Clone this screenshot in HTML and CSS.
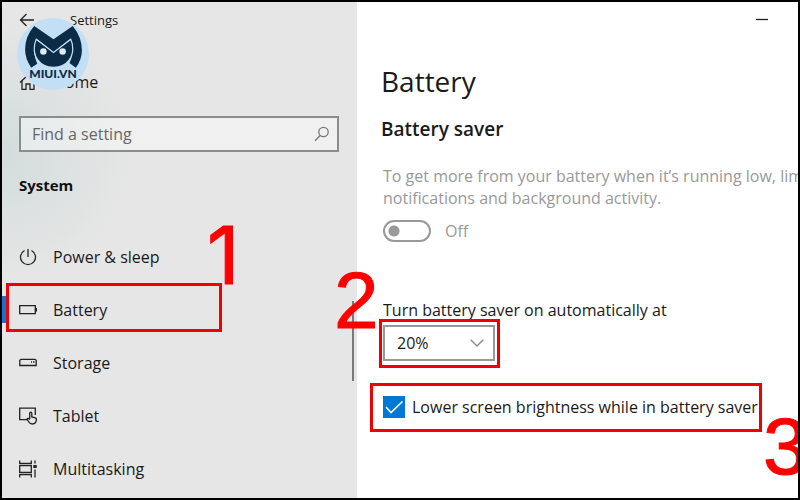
FILE: index.html
```html
<!DOCTYPE html>
<html lang="en">
<head>
    <meta charset="UTF-8">
    <meta name="viewport" content="width=device-width, initial-scale=1.0">
    <title>Settings - Battery</title>
    <link rel="stylesheet" href="styles.css">
</head>
<body>
    <div class="window">
        <aside class="sidebar">
            <header class="titlebar">
                <button class="back" type="button" aria-label="Back">
                    <svg width="16" height="16" viewBox="0 0 16 16"><path d="M15 8H1.5M7.5 2L1.5 8l6 6"/></svg>
                </button>
                <span class="app-name">Settings</span>
            </header>

            <a class="nav-item home" href="#home">
                <svg width="18" height="18" viewBox="0 0 18 18"><path d="M1 9.5L9 2l8 7.5M3 8v8.300h4V11h4v5.300h4V8"/></svg>
                Home
            </a>

            <div class="search">
                <input type="search" placeholder="Find a setting" aria-label="Find a setting">
                <svg width="16" height="16" viewBox="0 0 16 16"><circle cx="9.500" cy="6" r="4.700"/><path d="M6.200 9.500L1 14.700"/></svg>
            </div>

            <h2 class="group">System</h2>

            <nav class="nav">
                <a class="nav-item" href="#power">
                    <svg width="18" height="18" viewBox="0 0 18 18"><path d="M9 1v8M5.500 2.500a7.500 7.500 0 1 0 7 0"/></svg>
                    Power &amp; sleep
                </a>
                <a class="nav-item active" href="#battery">
                    <svg width="18" height="18" viewBox="0 0 18 18"><path d="M.7 4.700h15.600v8H.7zM17.400 7v3.500"/></svg>
                    Battery
                    <span class="mark mark-battery"></span>
                    <span class="step step-1">1</span>
                </a>
                <a class="nav-item" href="#storage">
                    <svg width="18" height="18" viewBox="0 0 18 18"><path d="M.8 11.500V6.200L2 5.300h14l1.200.9v5.300z"/><path d="M12 8h1M14 8h1.500"/></svg>
                    Storage
                </a>
                <a class="nav-item" href="#tablet">
                    <svg width="18" height="18" viewBox="0 0 18 18"><path d="M8 12.700H.7V1.200h15.600V8"/><path d="M10.700 12V6q1-1.700 2.100 0v4l3.500.8q1.300.5 1.100 2-.3 4-3.900 4.200-2.500 0-3.700-2l-1.800-3q.9-1.500 2.800.500"/></svg>
                    Tablet
                </a>
                <a class="nav-item" href="#multitasking">
                    <svg width="18" height="18" viewBox="0 0 18 18"><path d="M.7.500v2.800h11.600V.500M.7 17.500v-2.800h11.600v2.800M.7 5.500h11.600v7H.7zM16 .5v3M16 9.500v8"/><path d="M14.300 6.500h3.400" stroke-width="3"/></svg>
                    Multitasking
                </a>
            </nav>

            <div class="scroll-thumb"></div>

            <div class="logo">
                <svg class="logo-art" viewBox="0 0 71 71">
                    <circle cx="35.500" cy="35.500" r="35.500" fill="#c3dff5"/>
                    <path fill="#0b2b47" d="M17 8L36 21 55 8q9 11 9 24 0 9-6 17l-7-5q5-9 3-18l-2-5-16 13-16-13q-5 11-2 18 0 1 2 6l-6 4Q8 40 8 31 8 18 17 8z"/>
                    <path fill="#0b2b47" d="M17 20l19 14 19-14q2 14-4 21-5 7-15 7t-15-7q-6-7-4-21z"/>
                    <path fill="none" stroke="#c3dff5" stroke-width="1.200" d="M21 45q-4-10-4-14 0-6 2-10l17 13 17-13q2 4 2 10 0 4-4 14"/>
                    <circle cx="26" cy="33" r="3.200" fill="#dcecf9"/>
                    <circle cx="45" cy="33" r="3.200" fill="#dcecf9"/>
                </svg>
                <span class="logo-name">MIUI.VN</span>
            </div>
        </aside>

        <main class="content">
            <div class="window-controls">
                <button class="minimize" type="button" aria-label="Minimize">
                    <svg width="12" height="12" viewBox="0 0 12 12"><path d="M0 6.500h12"/></svg>
                </button>
            </div>

            <h1>Battery</h1>
            <h2 class="section-title">Battery saver</h2>

            <p class="description">To get more from your battery when it’s running low, limit<br>notifications and background activity.</p>

            <label class="toggle">
                <input type="checkbox" role="switch" disabled>
                Off
            </label>

            <div class="field">
                <label for="threshold">Turn battery saver on automatically at</label>
                <div class="select">
                    <select id="threshold">
                        <option>20%</option>
                    </select>
                    <svg width="14" height="8" viewBox="0 0 14 8"><path d="M.7.700L7 7l6.300-6.300"/></svg>
                    <span class="mark mark-select"></span>
                    <span class="step step-2">2</span>
                </div>
            </div>

            <div class="check">
                <input type="checkbox" id="brightness" checked>
                <label for="brightness">Lower screen brightness while in battery saver</label>
                <span class="mark mark-check"></span>
                <span class="step step-3">3</span>
            </div>
        </main>
    </div>
</body>
</html>
```
FILE: styles.css
```css
* {
    box-sizing: border-box;
}
body {
    margin: 0;
    font-family: "Open Sans", "Noto Sans", sans-serif;
    font-size: 16px;
    line-height: 22px;
    color: #1a1a1a;
}
.window {
    display: grid;
    grid-template-columns: minmax(300px, 44.6%) 1fr;
    min-height: 100vh;
    border: 2px solid #000;
    overflow: hidden;
}
svg {
    flex: none;
    fill: none;
    stroke: #222;
    stroke-width: 1.3;
}
h1,
h2,
p {
    margin: 0;
}
button {
    padding: 0;
    border: none;
    background: none;
    display: flex;
}

/* sidebar */
.sidebar {
    position: relative;
    padding: 0 18px 0 17px;
    background: radial-gradient(circle at 0 150px, #d3dcdc, #e6e6e6 130px);
}
.titlebar {
    display: flex;
    align-items: center;
    gap: 35px;
    height: 35px;
}
.app-name {
    font-size: 13px;
}
.nav-item {
    position: relative;
    display: flex;
    align-items: center;
    gap: 16px;
    height: 53px;
    color: inherit;
    text-decoration: none;
}
.home {
    height: 46px;
    margin-top: 22px;
    margin-bottom: 11px;
}
.search {
    display: flex;
    align-items: center;
    height: 36px;
    padding: 0 7px 0 11px;
    border: 2px solid #8a8d8d;
    background: rgba(255, 255, 255, 0.4);
}
.search input {
    flex: 1;
    min-width: 0;
    padding: 0;
    border: none;
    outline: none;
    background: none;
    font: inherit;
}
.search input::placeholder {
    color: #666;
    opacity: 1;
}
.search svg {
    stroke: #777;
}
.group {
    margin: 22px 0 34px;
    font-size: 15px;
    font-weight: 700;
    color: #111;
}
.active::before {
    content: "";
    position: absolute;
    left: -17px;
    width: 5px;
    height: 27px;
    background: #1673cf;
}
.scroll-thumb {
    position: absolute;
    right: 3px;
    top: 299px;
    width: 2px;
    height: 80px;
    background: #7a7a7a;
}

/* logo badge over the top left corner */
.logo {
    position: absolute;
    left: 15px;
    top: 16px;
    width: 72px;
    height: 72px;
}
.logo-art {
    width: 100%;
    height: 100%;
    stroke: none;
}
.logo-name {
    position: absolute;
    left: 0;
    right: 0;
    top: 50px;
    text-align: center;
    font: 900 12px/12px Lato, sans-serif;
    color: #0b2b47;
}

/* content */
.content {
    min-width: 0;
    padding: 0 24px 0 26px;
    background: #fff;
}
.window-controls {
    display: flex;
    justify-content: flex-end;
    align-items: center;
    height: 34px;
    padding-right: 6px;
}
h1 {
    margin-top: 25px;
    margin-left: -2px;
    font-size: 28px;
    font-weight: 400;
    line-height: 40px;
}
.section-title {
    margin-top: 14px;
    margin-left: -2px;
    font-size: 19px;
    font-weight: 600;
    line-height: 28px;
}
.description {
    margin-top: 22px;
    white-space: nowrap;
    color: #999;
}
.toggle {
    display: flex;
    align-items: center;
    gap: 14px;
    margin-top: 11px;
    color: #999;
}
.toggle input {
    appearance: none;
    width: 48px;
    height: 22px;
    margin: 0;
    border: 2px solid #999;
    border-radius: 11px;
    background: radial-gradient(circle at 9px 9px, #999 5px, transparent 6px);
}
.field {
    margin-top: 57px;
}
.field label {
    display: block;
}
.select {
    position: relative;
    display: flex;
    align-items: center;
    width: 112px;
    height: 36px;
    margin-top: 4px;
}
.select select {
    appearance: none;
    width: 100%;
    height: 100%;
    padding: 0 12px;
    border: 2px solid #999;
    border-radius: 0;
    background: #fff;
    color: inherit;
    font: inherit;
}
.select svg {
    position: absolute;
    right: 11px;
    stroke: #888;
    pointer-events: none;
}
.check {
    position: relative;
    display: flex;
    align-items: center;
    gap: 7px;
    margin-top: 35px;
    white-space: nowrap;
}
.check input {
    appearance: none;
    flex: none;
    width: 22px;
    height: 22px;
    margin: 0;
    background: #0078d7;
}
.check input:checked {
    background: #0078d7 url("data:image/svg+xml,%3Csvg xmlns='http://www.w3.org/2000/svg' viewBox='0 0 22 22'%3E%3Cpath d='M3 11l5 5.500L19.500 5.500' fill='none' stroke='white' stroke-width='1.600'/%3E%3C/svg%3E");
}

/* red step markers */
.mark {
    position: absolute;
    border: 3px solid #f00000;
    pointer-events: none;
}
.mark-battery {
    left: -13px;
    right: 117px;
    top: 0;
    bottom: 4px;
}
.mark-select {
    left: -4px;
    right: -5px;
    top: -6px;
    bottom: -7px;
}
.mark-check {
    left: -13px;
    right: 12px;
    top: -13px;
    bottom: -14px;
}
.step {
    position: absolute;
    font: 80px/80px "Liberation Sans", Arial, sans-serif;
    color: #f00;
    -webkit-text-stroke: 1px #f00;
    pointer-events: none;
}
.step-1 {
    left: 188px;
    top: -68px;
    font-family: Inter, sans-serif;
}
.step-2 {
    left: -49px;
    top: -64px;
}
.step-3 {
    left: 380px;
    top: 11px;
}
```
